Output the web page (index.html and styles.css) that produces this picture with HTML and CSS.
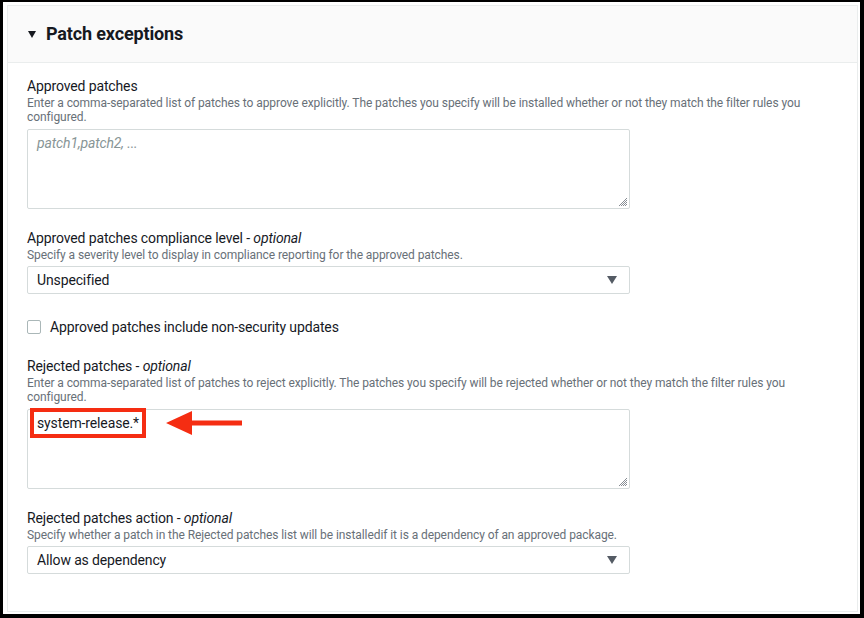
FILE: index.html
```html
<!DOCTYPE html>
<html lang="en">
<head>
<meta charset="utf-8">
<title>Patch exceptions</title>
<link rel="stylesheet" href="styles.css">
</head>
<body>
<div class="frame">
  <section class="panel">
    <header class="panel-head">
      <span class="caret"></span>
      <h2 class="panel-title">Patch exceptions</h2>
    </header>
    <div class="panel-body">
      <div class="field">
        <div class="label">Approved patches</div>
        <p class="desc">Enter a comma-separated list of patches to approve explicitly. The patches you specify will be installed whether or not they match the filter rules you configured.</p>
        <div class="textarea">
          <span class="placeholder">patch1,patch2, ...</span>
          <svg class="grip" width="10" height="10" viewBox="0 0 10 10"><path d="M9 1L1 9M9 3L3 9M9 5L5 9M9 7L7 9" stroke="#687078" stroke-width="0.8"/></svg>
        </div>
      </div>
      <div class="field">
        <div class="label">Approved patches compliance level - <i>optional</i></div>
        <p class="desc">Specify a severity level to display in compliance reporting for the approved patches.</p>
        <div class="select"><span>Unspecified</span><span class="arrow"></span></div>
      </div>
      <div class="field check-field">
        <span class="checkbox"></span>
        <span class="check-label">Approved patches include non-security updates</span>
      </div>
      <div class="field">
        <div class="label">Rejected patches - <i>optional</i></div>
        <p class="desc">Enter a comma-separated list of patches to reject explicitly. The patches you specify will be rejected whether or not they match the filter rules you configured.</p>
        <div class="textarea">
          <span class="value">system-release.*</span>
          <span class="highlight"></span>
          <svg class="callout-arrow" width="78" height="26" viewBox="0 0 78 26"><path d="M0 13L26 1V10.5H76V15.5H26V25Z" fill="#f52d12"/></svg>
          <svg class="grip" width="10" height="10" viewBox="0 0 10 10"><path d="M9 1L1 9M9 3L3 9M9 5L5 9M9 7L7 9" stroke="#687078" stroke-width="0.8"/></svg>
        </div>
      </div>
      <div class="field last">
        <div class="label">Rejected patches action - <i>optional</i></div>
        <p class="desc">Specify whether a patch in the Rejected patches list will be installedif it is a dependency of an approved package.</p>
        <div class="select"><span>Allow as dependency</span><span class="arrow"></span></div>
      </div>
    </div>
  </section>
</div>
</body>
</html>
```
FILE: styles.css
```css
* { box-sizing: border-box; }
html, body { margin: 0; padding: 0; }
body {
  background: #000;
  width: 864px;
  height: 618px;
  overflow: hidden;
  font-family: Roboto, "Noto Sans", sans-serif;
  color: #16191f;
}
.frame {
  margin: 2px 4px 0 3px;
  height: 612px;
  background: #fff;
  padding: 3px 2px 0 4px;
}
.panel {
  border: 1px solid #eaeded;
  background: #fff;
  height: 607px;
}
.panel-head {
  height: 57px;
  background: #fafafa;
  border-bottom: 1px solid #eaeded;
  display: flex;
  align-items: center;
  padding-left: 20px;
}
.caret {
  width: 0; height: 0;
  border-left: 4.5px solid transparent;
  border-right: 4.5px solid transparent;
  border-top: 7px solid #16191f;
  margin-right: 10px;
  margin-top: 1px;
}
.panel-title {
  margin: 0;
  font-size: 18px;
  font-weight: 700;
  line-height: 22px;
  letter-spacing: -0.15px;
}
.panel-body {
  padding: 13px 19px 0 19px;
}
.label {
  font-size: 14px;
  line-height: 20px;
  letter-spacing: -0.13px;
}
.label i { font-style: italic; }
.desc {
  margin: 0 0 4px 0;
  font-size: 12px;
  line-height: 14px;
  color: #687078;
  max-width: 790px;
  letter-spacing: -0.08px;
}
.textarea {
  position: relative;
  width: 603px;
  height: 80px;
  border: 1px solid #d5dbdb;
  border-radius: 2px;
  margin-top: 5px;
  padding: 3px 9px;
  font-size: 14px;
  line-height: 20px;
  letter-spacing: -0.13px;
}
.placeholder { color: #879596; font-style: italic; }
.value { color: #16191f; }
.grip { position: absolute; right: 1px; bottom: 1px; }
.highlight {
  position: absolute;
  left: 2px; top: -2px;
  width: 116px; height: 30px;
  border: 4px solid #f52d12;
}
.callout-arrow {
  position: absolute;
  left: 138px; top: 0px;
}
.select {
  width: 603px;
  height: 28px;
  border: 1px solid #d5dbdb;
  border-radius: 2px;
  display: flex;
  align-items: center;
  justify-content: space-between;
  padding: 0 12px 0 9px;
  font-size: 14px;
  letter-spacing: -0.13px;
}
.arrow {
  width: 0; height: 0;
  border-left: 5px solid transparent;
  border-right: 5px solid transparent;
  border-top: 8px solid #545b64;
}
.field { margin-bottom: 0; }
.field + .field { margin-top: 19px; }
.check-field {
  display: flex;
  align-items: center;
  height: 20px;
}
.field + .check-field { margin-top: 23px; }
.checkbox {
  width: 14px; height: 14px;
  border: 1px solid #aab7b8;
  border-radius: 2px;
  margin-right: 9px;
}
.check-label { font-size: 14px; line-height: 20px; letter-spacing: -0.13px; }
```
